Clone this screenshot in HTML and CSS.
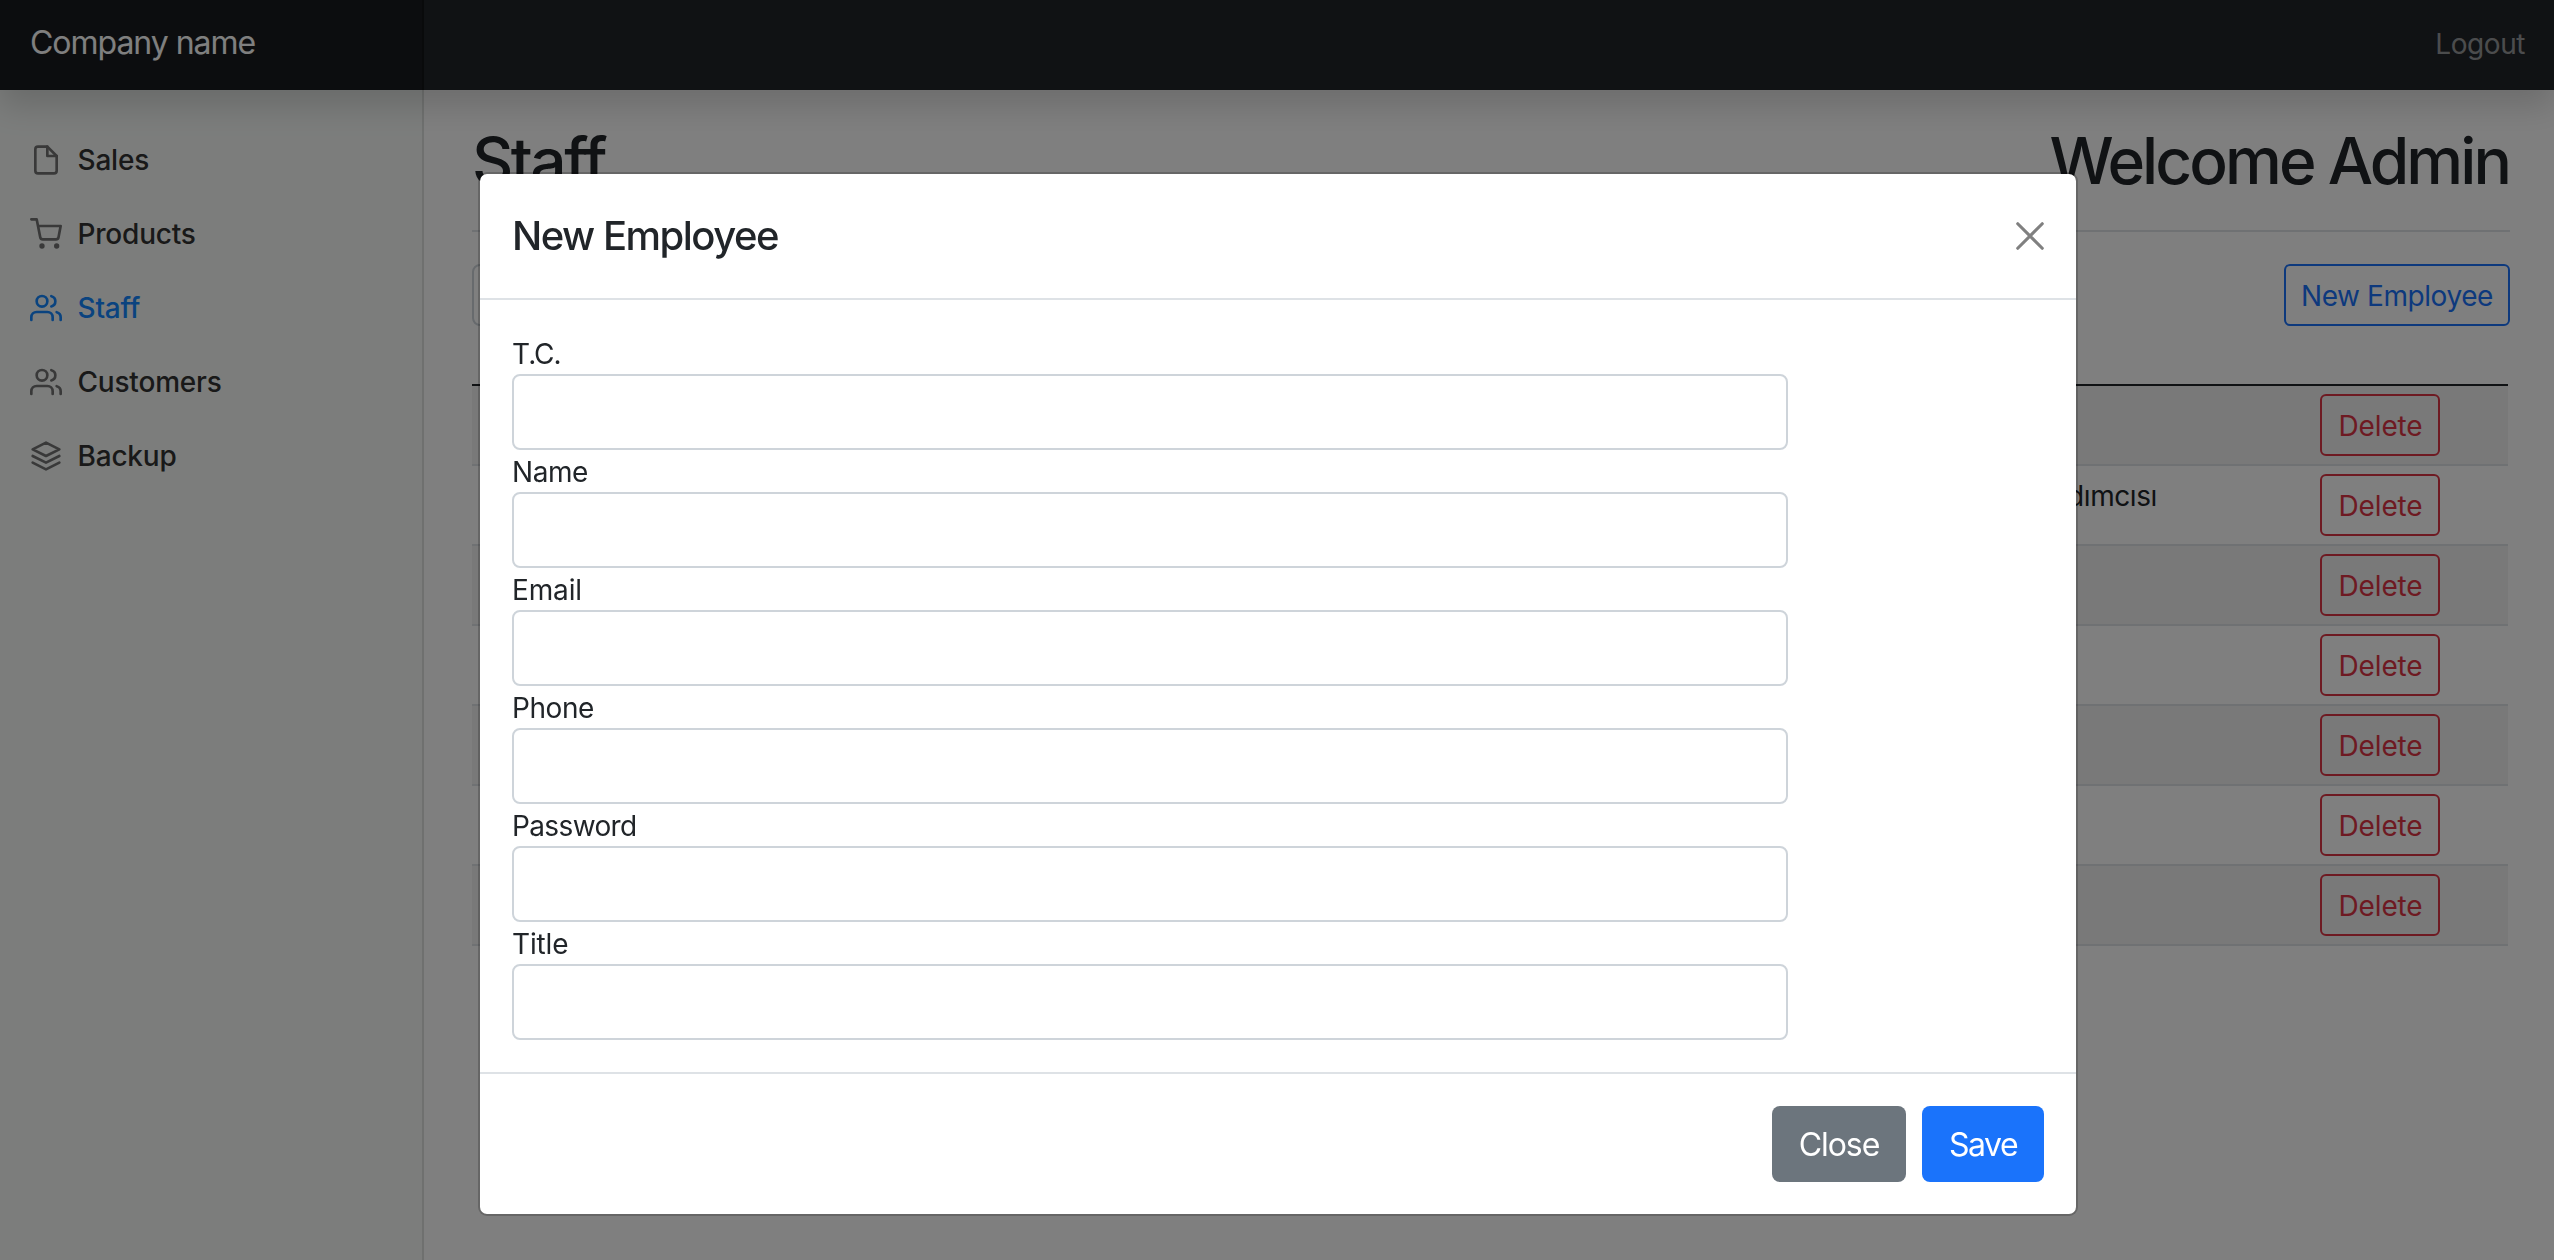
FILE: index.html
```
<!DOCTYPE html>
<html lang="en">
<head>
<meta charset="utf-8">
<title>Staff</title>
<link rel="stylesheet" href="styles.css">
</head>
<body>
<header class="navbar">
  <a class="brand">Company name</a>
  <a class="logout">Logout</a>
</header>
<div class="layout">
  <nav class="sidebar">
    <a class="nav-link"><svg class="icon" viewBox="0 0 24 24"><path d="M13 2H6a2 2 0 0 0-2 2v16a2 2 0 0 0 2 2h12a2 2 0 0 0 2-2V9z"/><path d="M13 2v7h7"/></svg><span>Sales</span></a>
    <a class="nav-link"><svg class="icon" viewBox="0 0 24 24"><circle cx="9" cy="21" r="1"/><circle cx="20" cy="21" r="1"/><path d="M1 1h4l2.68 13.39a2 2 0 0 0 2 1.61h9.72a2 2 0 0 0 2-1.61L23 6H6"/></svg><span>Products</span></a>
    <a class="nav-link active"><svg class="icon" viewBox="0 0 24 24"><path d="M17 21v-2a4 4 0 0 0-4-4H5a4 4 0 0 0-4 4v2"/><circle cx="9" cy="7" r="4"/><path d="M23 21v-2a4 4 0 0 0-3-3.87M16 3.13a4 4 0 0 1 0 7.75"/></svg><span>Staff</span></a>
    <a class="nav-link"><svg class="icon" viewBox="0 0 24 24"><path d="M17 21v-2a4 4 0 0 0-4-4H5a4 4 0 0 0-4 4v2"/><circle cx="9" cy="7" r="4"/><path d="M23 21v-2a4 4 0 0 0-3-3.87M16 3.13a4 4 0 0 1 0 7.75"/></svg><span>Customers</span></a>
    <a class="nav-link"><svg class="icon" viewBox="0 0 24 24"><path d="M12 2 2 7l10 5 10-5-10-5zM2 17l10 5 10-5M2 12l10 5 10-5"/></svg><span>Backup</span></a>
  </nav>
  <main class="main">
    <div class="page-head"><h1 class="heading">Staff</h1><h1 class="heading welcome">Welcome Admin</h1></div>
    <div class="toolbar"><div class="search"></div><button class="btn-sm primary">New Employee</button></div>
    <div class="table">
      <div class="row"><button class="btn-sm danger">Delete</button></div>
      <div class="row"><span class="job">Satış Yardımcısı</span><button class="btn-sm danger">Delete</button></div>
      <div class="row"><button class="btn-sm danger">Delete</button></div>
      <div class="row"><button class="btn-sm danger">Delete</button></div>
      <div class="row"><button class="btn-sm danger">Delete</button></div>
      <div class="row"><button class="btn-sm danger">Delete</button></div>
      <div class="row"><button class="btn-sm danger">Delete</button></div>
    </div>
  </main>
</div>
<div class="backdrop">
  <div class="modal">
    <div class="modal-head"><h5 class="modal-title">New Employee</h5><svg class="x" viewBox="0 0 16 16"><path d="M1 1l14 14M15 1L1 15"/></svg></div>
    <div class="modal-body">
      <label class="tc">T.C.</label><input type="text">
      <label>Name</label><input type="text">
      <label class="wide">Email</label><input type="text">
      <label>Phone</label><input type="text">
      <label class="tight">Password</label><input type="text">
      <label class="wide">Title</label><input type="text">
    </div>
    <div class="modal-foot"><button class="btn close">Close</button><button class="btn save">Save</button></div>
  </div>
</div>
</body>
</html>
```
FILE: styles.css
```
* { box-sizing: border-box; }
body { margin: 0; height: 1260px; overflow: hidden; background: #fff; color: #212529; font: 400 28px/42px Inter, sans-serif; }

/* top bar */
.navbar { position: relative; z-index: 2; display: flex; justify-content: space-between; align-items: center; height: 90px; background: #212529; box-shadow: 0 16px 32px rgba(0,0,0,.15); }
.brand { width: 424px; height: 90px; padding: 19px 30px; font-size: 32px; line-height: 48px; letter-spacing: -1.03px; color: #fff; background: rgba(0,0,0,.25); box-shadow: inset -2px 0 0 rgba(0,0,0,.25); }
.logout { padding: 0 29px 2px 0; letter-spacing: -.43px; color: rgba(255,255,255,.55); }

/* sidebar */
.layout { display: flex; height: 1170px; }
.sidebar { width: 424px; padding: 33px 30px; background: #f8fbf9; box-shadow: inset -2px 0 0 rgba(0,0,0,.1); }
.nav-link { display: flex; align-items: center; gap: 15.5px; height: 74px; color: #333; font-weight: 500; letter-spacing: -.2px; }
.icon { width: 32px; height: 32px; fill: none; stroke: #727272; stroke-width: 2; stroke-linecap: round; stroke-linejoin: round; }
.active { color: #1487ff; }
.active .icon { stroke: currentColor; }

/* page content */
.main { width: 2038px; margin-left: 48px; }
.page-head { display: flex; justify-content: space-between; height: 142px; padding-top: 32px; border-bottom: 2px solid #dee2e6; }
.heading { margin: 0; font-size: 64px; line-height: 77px; font-weight: 500; letter-spacing: -2.55px; }
.welcome { letter-spacing: -2.93px; padding-right: 1px; }
.toolbar { display: flex; justify-content: space-between; padding-top: 32px; height: 152px; }
.search { width: 400px; height: 62px; border: 2px solid #ced4da; border-radius: 8px; }
.btn-sm { height: 62px; padding: 2px 0 0; border: 2px solid; border-radius: 6px; background: none; font: inherit; }
.primary { width: 226px; letter-spacing: -.43px; color: #1a73fb; border-color: #1a73fb; }
.danger { width: 120px; letter-spacing: -.14px; padding-left: 1px; color: #dc3545; border-color: #dc3545; }
.table { width: 2036px; border-top: 2px solid #212529; }
.row { display: flex; justify-content: flex-end; height: 80px; padding: 8px 68px 8px 0; border-bottom: 2px solid #dee2e6; }
.row:nth-child(odd) { background: rgba(0,0,0,.05); }
.job { padding: 1px 163px 0 0; letter-spacing: -.4px; white-space: nowrap; }

/* dialog */
.backdrop { position: fixed; z-index: 5; inset: 0; padding-top: 172px; background: rgba(0,0,0,.5); }
.modal { width: 1600px; margin-left: 478px; border: 2px solid rgba(0,0,0,.2); border-radius: 9px; background: #fff; background-clip: padding-box; }
.modal-head { display: flex; justify-content: space-between; align-items: center; height: 126px; padding: 0 32px; border-bottom: 2px solid #dee2e6; }
.modal-title { margin: 0; font-size: 40px; line-height: 60px; font-weight: 500; letter-spacing: -1.5px; }
.x { width: 28px; height: 28px; fill: none; stroke: #808080; stroke-width: 1.8; stroke-linecap: round; overflow: visible; }
.modal-body { padding: 32px; }
label { display: block; height: 42px; padding-top: 1px; letter-spacing: -.45px; }
.tc { letter-spacing: -.97px; }
.wide { letter-spacing: -.15px; }
.tight { letter-spacing: -.63px; }
input { display: block; width: 1276px; height: 76px; border: 2px solid #ced4da; border-radius: 8px; }
.modal-foot { display: flex; justify-content: flex-end; gap: 16px; padding: 32px; border-top: 2px solid #dee2e6; }
.btn { height: 76px; padding: 2px 0 0; border: 0; border-radius: 8px; color: #fff; font: 400 32px/48px Inter, sans-serif; }
.close { width: 134px; letter-spacing: -1.05px; background: #6c757d; }
.save { width: 122px; letter-spacing: -1.46px; background: #1a73fb; }
```
